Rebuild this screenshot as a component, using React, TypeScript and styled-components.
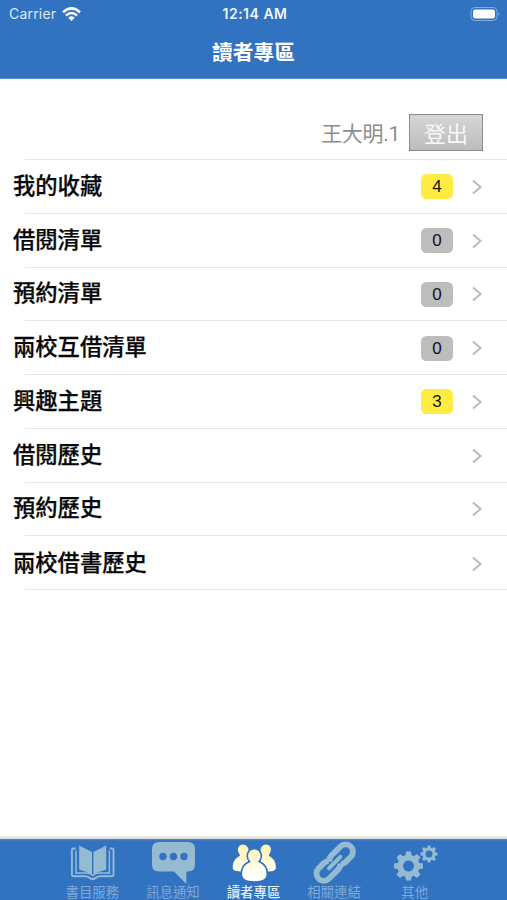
import React from "react";
import styled, { createGlobalStyle } from "styled-components";

const GlobalStyle = createGlobalStyle`
  * { box-sizing: border-box; }
  body { margin: 0; background: #fff; font-family: Inter, "Noto Sans CJK TC", sans-serif; }
`;

const Screen = styled.div`
  width: 507px;
  height: 900px;
  display: flex;
  flex-direction: column;
  background: #fff;
  overflow: hidden;
`;

const Header = styled.header`
  height: 79px;
  flex: none;
  background: #3173c1;
  color: #fff;
  border-bottom: 1px solid #5b90cf;
`;

const StatusBar = styled.div`
  height: 27px;
  display: grid;
  grid-template-columns: 1fr auto 1fr;
  align-items: center;
  padding: 0 6px 0 9px;
`;

const Carrier = styled.div`
  display: flex;
  align-items: center;
  gap: 6px;
  color: #dceaf9;
  font-size: 14px;
  letter-spacing: 0.2px;
`;

const Clock = styled.div`
  font-size: 14px;
  font-weight: 600;
  letter-spacing: 0.5px;
  color: #eef5fd;
`;

const BatteryIcon = styled.svg`
  justify-self: end;
`;

const Title = styled.h1`
  margin: 0;
  height: 51px;
  line-height: 52px;
  text-align: center;
  font-size: 20.7px;
  font-weight: 700;
`;

const Account = styled.div`
  height: 80px;
  flex: none;
  display: flex;
  justify-content: flex-end;
  align-items: flex-start;
  gap: 9px;
  padding: 35px 24px 0 0;
`;

const UserName = styled.span`
  font: 400 21px/40px Roboto, "Noto Sans CJK TC", sans-serif;
  letter-spacing: -0.3px;
  color: #8d8d8d;
`;

const LogoutButton = styled.button`
  width: 74px;
  height: 37px;
  padding: 0;
  border: 1.5px solid #8b8b8b;
  border-radius: 0;
  background: linear-gradient(#d6d6d6, #bcbcbc);
  color: #f8f8f8;
  font: 400 22px/33px "Noto Sans CJK TC", sans-serif;
`;

const List = styled.ul`
  list-style: none;
  margin: 0;
  padding: 0;
  flex: 1;
`;

const Row = styled.li`
  height: 53.75px;
  display: flex;
  align-items: center;
  padding: 0 24px 0 13px;
  background: linear-gradient(#e6e6e6, #e6e6e6) 25px 0 / 100% 1px no-repeat;

  &:last-child {
    height: 54.75px;
    background: linear-gradient(#e6e6e6, #e6e6e6) 25px 0 / 100% 1px no-repeat,
      linear-gradient(#e6e6e6, #e6e6e6) 25px 100% / 100% 1px no-repeat;
  }
`;

const Label = styled.span`
  flex: 1;
  font: 500 22.3px/50px "Noto Sans CJK TC", sans-serif;
  -webkit-text-stroke: 0.25px #080808;
  color: #080808;
  margin-top: -4px;
`;

const Badge = styled.span<{ $active: boolean }>`
  width: 32px;
  height: 25px;
  margin: 2px 18px 0 0;
  border-radius: 5.5px;
  text-align: center;
  font: 400 17px/26px "Liberation Sans", sans-serif;
  color: #111;
  background: ${(p) => (p.$active ? "#ffec43" : "#bdbdbd")};
`;

const Chevron = styled.svg`
  margin-top: 2px;
`;

const TabBar = styled.nav`
  height: 64px;
  flex: none;
  display: flex;
  justify-content: center;
  background: linear-gradient(#f4f4f4, #d5d5d5 3px, #5c87b9 3px, #3173c1 5px);
`;

const Tab = styled.div<{ $active?: boolean }>`
  width: 80.6px;
  display: flex;
  flex-direction: column;
  align-items: center;
  padding-top: 4px;
  color: ${(p) => (p.$active ? "#e2edf7" : "#7fa9d6")};
  font: ${(p) => (p.$active ? 500 : 400)} 13.4px/16px "Noto Sans CJK TC", sans-serif;
  white-space: nowrap;
`;

const TabIcon = styled.svg`
  display: block;
  margin-bottom: 1px;
  flex: none;
  overflow: visible;
`;

const TINT = "#94bbd2";
const BLUE = "#3173c1";

function gear(cx: number, cy: number, outer: number, root: number, hole: number) {
  const point = (r: number, a: number) =>
    `${(cx + r * Math.cos(a)).toFixed(2)} ${(cy + r * Math.sin(a)).toFixed(2)}`;
  const pts: string[] = [];
  for (let i = 0; i < 8; i++) {
    const a = (i * Math.PI) / 4;
    pts.push(point(root, a - 0.28), point(outer, a - 0.17), point(outer, a + 0.17), point(root, a + 0.28));
  }
  return `M${pts.join("L")}Z M${cx - hole} ${cy}a${hole} ${hole} 0 1 0 ${hole * 2} 0a${hole} ${hole} 0 1 0 ${-hole * 2} 0Z`;
}

const BookIcon = () => (
  <TabIcon width="48" height="42" viewBox="-0.7 0 48 42">
    <path d="M7 8.5H5Q3.2 8.5 3.2 10.3V34.5Q3.2 36.3 5 36.3H17C20 36.3 21 39 24 39S28 36.3 31 36.3H43Q44.800 36.300 44.800 34.500V10.300Q44.800 8.500 43 8.500H41" fill="none" stroke={TINT} strokeWidth="1.900" />
    <path d="M7.300 10.500V33H17.500Q21.500 33 24 35.500Q26.500 33 30.500 33H40.700V10.500" fill="none" stroke={TINT} strokeWidth="1.500" />
    <path d="M10.500 5.500 23.300 12V34L10.500 29.500ZM37.500 5.500 24.700 12V34L37.500 29.500Z" fill={TINT} />
  </TabIcon>
);

const ChatIcon = () => (
  <TabIcon width="48" height="42" viewBox="0 0 48 42">
    <path d="M10 2H39Q46 2 46 9V24.500Q46 31.500 39 31.500H37.300V44L25 31.500H10Q3 31.500 3 24.500V9Q3 2 10 2Z" fill={TINT} />
    <g fill={BLUE}>
      <circle cx="14" cy="16.500" r="3.700" />
      <circle cx="24.500" cy="16.500" r="3.700" />
      <circle cx="35" cy="16.500" r="3.700" />
    </g>
  </TabIcon>
);

const PeopleIcon = () => (
  <TabIcon width="48" height="42" viewBox="0.5 0 48 42">
    <defs>
      <linearGradient id="glow" gradientUnits="userSpaceOnUse" x1="0" y1="4" x2="0" y2="36">
        <stop offset="0" stopColor="#fff4b0" />
        <stop offset="1" stopColor="#fffffb" />
      </linearGradient>
    </defs>
    <g fill="url(#glow)">
      <path d="M13.700 4.600A5.400 5.400 0 0 1 19 10V24L12.500 31.500C7 31.500 3.200 31 3.200 27.500C3.200 21.500 6 18 9.800 16.200C10.800 15.600 10.500 14.600 9.800 13.800C7 10.500 8.500 4.600 13.700 4.600Z" />
      <path d="M36.300 4.600A5.400 5.400 0 0 0 31 10V24L37.500 31.500C42.500 31.500 46.400 31 46.400 27.500C46.400 21.500 43.600 18 40 16.200C39 15.600 39.300 14.600 40 13.800C43 10.500 41.500 4.600 36.300 4.600Z" />
      <path d="M24.800 8.800C31.500 8.800 34 16.500 29.600 21.500C34.500 23.500 37.800 27.500 37.800 34C37.800 39.500 33 42 24.800 42C16.600 42 11.800 39.500 11.800 34C11.800 27.500 15.100 23.500 20 21.500C15.600 16.500 18.100 8.800 24.800 8.800Z" stroke={BLUE} strokeWidth="1.600" />
    </g>
  </TabIcon>
);

const LinkIcon = () => (
  <TabIcon width="48" height="42" viewBox="0 0 48 42">
    <g transform="translate(24.700 22.600) rotate(-45)" fill="none" stroke={TINT} strokeWidth="5.800">
      <path d="M-3.500 -4.500Q-1 -7.300 3 -7.300H15.500A7.300 7.300 0 0 1 15.500 7.300H8Q5 7.300 3 5.500" />
      <path d="M3.500 4.500Q1 7.300 -3 7.300H-15.500A7.300 7.300 0 0 1 -15.500 -7.300H-8Q-5 -7.300 -3 -5.500" />
      <path d="M-8 0H8" strokeWidth="4" strokeLinecap="round" />
    </g>
  </TabIcon>
);

const GearsIcon = () => (
  <TabIcon width="48" height="42" viewBox="0 0 48 42">
    <path fillRule="evenodd" fill={TINT} d={gear(17.500, 26, 14.700, 11.200, 5.500)} />
    <path fillRule="evenodd" fill={TINT} d={gear(38, 14, 8.600, 6.500, 3.500)} />
  </TabIcon>
);

const rows: { label: string; count?: number }[] = [
  { label: "我的收藏", count: 4 },
  { label: "借閱清單", count: 0 },
  { label: "預約清單", count: 0 },
  { label: "兩校互借清單", count: 0 },
  { label: "興趣主題", count: 3 },
  { label: "借閱歷史" },
  { label: "預約歷史" },
  { label: "兩校借書歷史" },
];

const tabs = [
  { label: "書目服務", Icon: BookIcon },
  { label: "訊息通知", Icon: ChatIcon },
  { label: "讀者專區", Icon: PeopleIcon, active: true },
  { label: "相關連結", Icon: LinkIcon },
  { label: "其他", Icon: GearsIcon },
];

export default function App() {
  return (
    <Screen>
      <GlobalStyle />
      <Header>
        <StatusBar>
          <Carrier>
            Carrier
            <svg width="19" height="14" viewBox="0 0 19 14" fill="none" stroke="#fff" strokeWidth="2.500">
              <path d="M1 5.200Q9.500-2.500 18 5.200M4 8.500Q9.500 3.500 15 8.500" />
              <path d="M6.300 10.700Q9.500 8 12.700 10.700L9.500 13.900Z" fill="#fff" stroke="none" />
            </svg>
          </Carrier>
          <Clock>12:14 AM</Clock>
          <BatteryIcon width="31" height="14" viewBox="0 0 31 14">
            <rect x="1" y=".5" width="26" height="13" rx="3.800" fill="none" stroke="#83acdd" />
            <rect x="3" y="2.500" width="22" height="9" rx="2" fill="#fff" />
            <path d="M28.500 5Q30.500 7 28.500 9Z" fill="#83acdd" />
          </BatteryIcon>
        </StatusBar>
        <Title>讀者專區</Title>
      </Header>
      <Account>
        <UserName>王大明.1</UserName>
        <LogoutButton>登出</LogoutButton>
      </Account>
      <List>
        {rows.map(({ label, count }) => (
          <Row key={label}>
            <Label>{label}</Label>
            {count !== undefined && <Badge $active={count > 0}>{count}</Badge>}
            <Chevron width="12" height="16" viewBox="0 0 12 16">
              <path d="M2 1.500 9.500 8 2 14.500" fill="none" stroke="#bdbdbd" strokeWidth="2.200" />
            </Chevron>
          </Row>
        ))}
      </List>
      <TabBar>
        {tabs.map(({ label, Icon, active }) => (
          <Tab key={label} $active={active}>
            <Icon />
            {label}
          </Tab>
        ))}
      </TabBar>
    </Screen>
  );
}
